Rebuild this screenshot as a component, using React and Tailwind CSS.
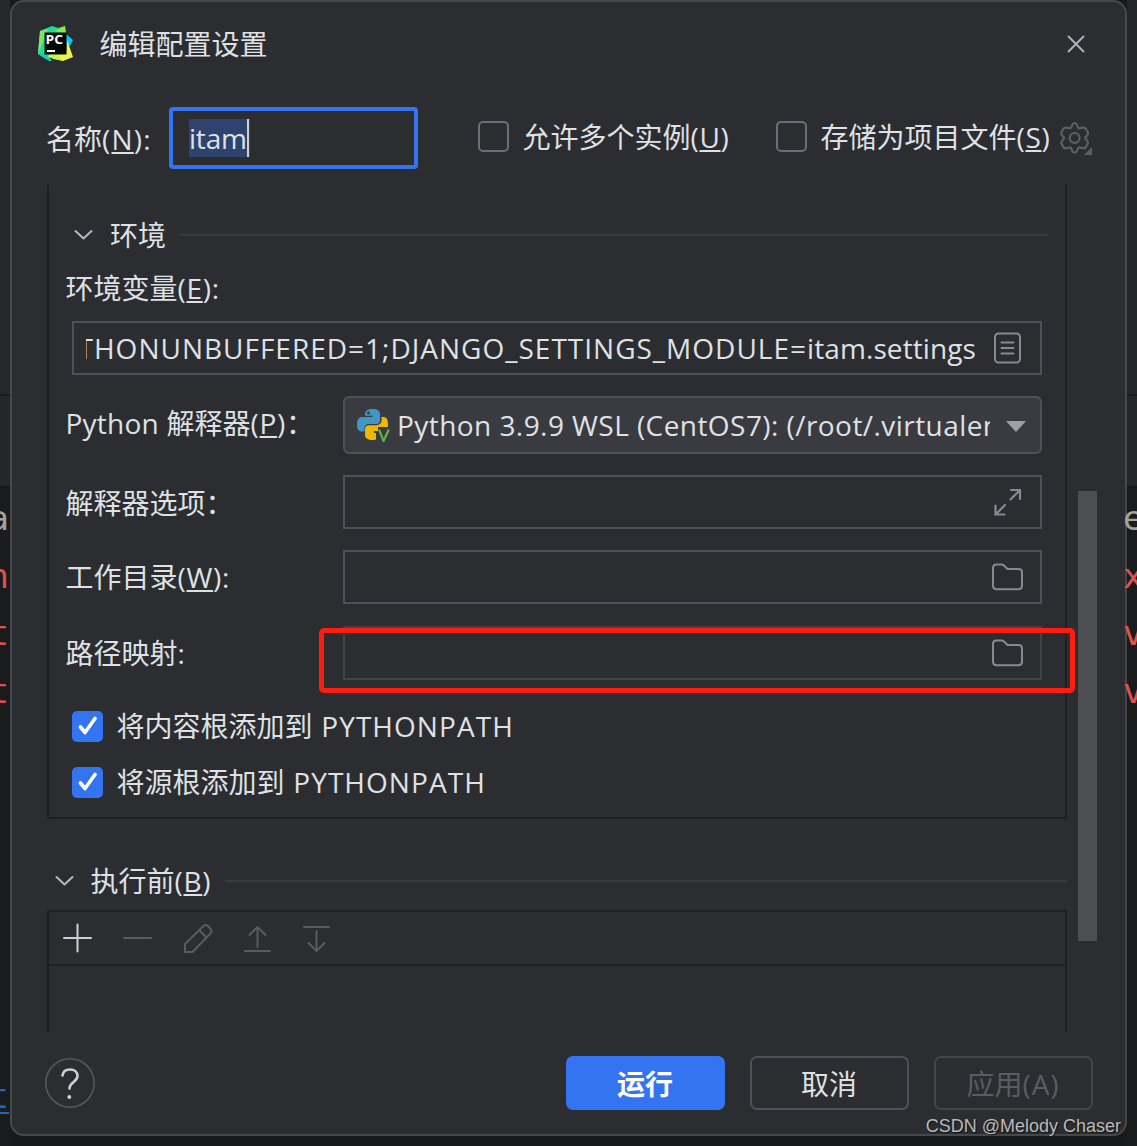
import clsx from 'clsx';

function Chevron() {
  return (
    <svg width="20" height="14" viewBox="0 0 20 14" fill="none" className="shrink-0">
      <path d="M2.500 3L10.500 10.500L18.500 3" stroke="#b4b8bf" strokeWidth="2" strokeLinecap="round" strokeLinejoin="round" />
    </svg>
  );
}

function FolderIcon() {
  return (
    <svg width="32" height="28" viewBox="0 0 32 28" fill="none">
      <path
        d="M1 5C1 3 2.300 1.500 4.300 1.500H9.700C10.500 1.500 11.100 1.800 11.700 2.300L15.500 6H26.500C28.700 6 30 7.300 30 9.300V22.800C30 25 28.700 26.200 26.500 26.200H4.500C2.300 26.200 1 25 1 22.800Z"
        stroke="#868a91"
        strokeWidth="2"
        strokeLinejoin="round"
      />
    </svg>
  );
}

function ListIcon() {
  return (
    <svg width="28" height="32" viewBox="0 0 28 32" fill="none" stroke="#868a91" strokeWidth="2">
      <rect x="1" y="1.500" width="25" height="29" rx="3.500" />
      <path d="M7.500 10.500H19.500M7.500 16H19.500M7.500 21.500H19.500" strokeLinecap="round" />
    </svg>
  );
}

function ExpandIcon() {
  return (
    <svg width="28" height="28" viewBox="0 0 28 28" fill="none" stroke="#868a91" strokeWidth="2.200" strokeLinecap="round">
      <path d="M17 2H26V11M25.500 2.500L16.500 11.500M1.500 17.500V26.500H10.500M2 26L11 17" />
    </svg>
  );
}

function GearIcon() {
  return (
    <svg width="33" height="34" viewBox="0 0 33 34" fill="none">
      <path
        d="M12.200 3.800Q12.800 2 14.600 2Q16.400 2 17 3.800L18 6.500Q18.600 7.500 19.800 7.200L23 6.600Q25 6.300 26 8L27.700 11Q28.500 12.600 27.300 14.200L25.700 16Q25 17 25.700 18L27.300 19.900Q28.500 21.300 27.600 23L26 25.900Q25 27.600 23 27.200L19.800 26.500Q18.600 26.300 18 27.400L17 30Q16.400 31.700 14.600 31.700Q12.800 31.700 12.200 30L11.200 27.400Q10.600 26.300 9.400 26.500L6.200 27.200Q4.200 27.600 3.200 25.900L1.700 23Q.8 21.300 2 19.900L3.600 18Q4.300 17 3.600 16L2 14.200Q.8 12.600 1.600 11L3.200 8Q4.200 6.300 6.200 6.600L9.400 7.200Q10.600 7.500 11.200 6.500Z"
        stroke="#5e5f61"
        strokeWidth="2.200"
      />
      <circle cx="14.600" cy="16.900" r="4.900" stroke="#5e5f61" strokeWidth="2.200" />
      <path d="M32 26V34H24Z" fill="#5e5f61" />
    </svg>
  );
}

function PyCharmLogo() {
  return (
    <svg width="36" height="36" viewBox="0 0 36 36">
      <path d="M2 5L14 0L20 2L27 0L28 10L8 33L0 28Z" fill="#25d99a" />
      <path d="M2 5L10 3L5 16L0 28Z" fill="#7ce564" />
      <path d="M17 5L27 0L28 8Z" fill="#8de94a" />
      <path d="M28 8L35 14L32 20L28 18Z" fill="#10c4ee" />
      <path d="M0 28L8 26L14 35L11 35Z" fill="#18ccae" />
      <path d="M29 14L35 31L25 35L10 31L12 28L28 28Z" fill="#e9f74b" />
      <path d="M10 29L20 29L26 35L15 33Z" fill="#c8f34d" />
      <rect x="6.500" y="6.500" width="22" height="22" fill="#050a06" />
      <text
        x="7.600"
        y="17.500"
        className="font-['Open_Sans'] text-[12px] font-bold"
        textLength="17.500"
        lengthAdjust="spacingAndGlyphs"
        fill="#fff"
      >
        PC
      </text>
      <rect x="9" y="24" width="8" height="2" fill="#fff" />
    </svg>
  );
}

function PythonLogo() {
  return (
    <svg width="33" height="33" viewBox="0 0 33 33">
      <path
        d="M8 6C8 2 10 0 15.500 0C21 0 23 2 23 5V11C23 14 21.500 15 19 15H12C9 15 7.500 17 7.500 19V22.500H5C1.500 22.500 0 20 0 15.500C0 10.500 2 8 5.500 8H15.500V6.800H8Z"
        fill="#4296c4"
      />
      <circle cx="11.500" cy="4" r="1.400" fill="#393b40" />
      <path
        d="M24.500 8H26.500C30 8 31 11 31 15.500V18H21V22H17V24H19V30.500C18 31 17 31 15.500 31C11 31 8 29.500 8 26V20C8 17.500 9.500 16.200 12 16.200H19.500C22.500 16.200 24.500 14 24.500 11.500Z"
        fill="#edb900"
      />
      <path d="M22 20.500L26.500 32L31.800 20.500" fill="none" stroke="#5fb23f" strokeWidth="2.200" />
    </svg>
  );
}

function Checkbox({ checked }) {
  return (
    <span
      className={clsx(
        'flex size-[31px] shrink-0 items-center justify-center rounded-[5px]',
        checked ? 'bg-[#3574f0]' : 'border-2 border-[#6b6f76]'
      )}
    >
      {checked && (
        <svg width="20" height="20" viewBox="0 0 20 20" fill="none">
          <path d="M2.500 11L7 16.500L17 2.500" stroke="#fff" strokeWidth="3.600" strokeLinecap="round" strokeLinejoin="round" />
        </svg>
      )}
    </span>
  );
}

// (X) part of a label with the underlined accelerator key
function Mnemonic({ children }) {
  return (
    <span className="tracking-[0.7px]">
      (<span className="underline decoration-2 underline-offset-[2px]">{children}</span>)
    </span>
  );
}

function Field({ className, children }) {
  return (
    <div className={clsx('flex h-[54px] items-center justify-end border-2 border-[#4e5157]', className)}>
      {children}
    </div>
  );
}

function Row({ label, children }) {
  return (
    <div className="flex items-center">
      <div className="w-[278px] shrink-0 pl-[0.5px]">{label}</div>
      {children}
    </div>
  );
}

function EditorStrip({ left, letters }) {
  return (
    <div
      className={clsx(
        'flex w-[10px] shrink-0 flex-col bg-[#1a1b1c] font-["DejaVu_Sans_Mono",monospace] text-[34px] leading-[57.5px]',
        left ? 'items-end' : 'items-start'
      )}
    >
      <div className={clsx('h-[396px] w-full shrink-0 border-b-2 border-[#1a1b1d]', left ? 'bg-[#27282a]' : 'bg-[#252628]')} />
      <div className="h-[92px] w-full shrink-0 border-b-2 border-[#161718] bg-[#252628]" />
      <div className={clsx('flex flex-col pt-[2px]', left ? 'mr-px' : '-ml-[4px]')}>
        <span className="text-[#a5a39e]">{letters[0]}</span>
        {letters.slice(1).map((letter, i) => (
          <span key={i} className="text-[#dc5350]">{letter}</span>
        ))}
        {left && <span className="mt-[348px] text-[#2566bb] underline decoration-2 underline-offset-[4px]">t</span>}
      </div>
    </div>
  );
}

export default function App() {
  return (
    <div className="relative flex h-[1146px] w-[1137px] overflow-hidden bg-[#18191b] font-['Open_Sans','Noto_Sans_CJK_SC',sans-serif] text-[28px] leading-[36px] whitespace-nowrap text-[#dfe1e5]">
      <EditorStrip left letters={['a', 'n', 't', 't']} />

      <div className="flex h-[1136px] w-[1117px] shrink-0 flex-col rounded-[14px] border-2 border-[#46484b] bg-[#2b2d30]">
        <header className="flex h-[84px] shrink-0 items-center pr-[39px] pl-[26px]">
          <PyCharmLogo />
          <h1 className="ml-[25.5px] flex-1">编辑配置设置</h1>
          <svg width="20" height="20" viewBox="0 0 20 20" className="shrink-0">
            <path d="M2 2L18 18M18 2L2 18" stroke="#b4b8bf" strokeWidth="1.800" />
          </svg>
        </header>

        <div className="mt-[21px] flex h-[62px] shrink-0 items-center pl-[34px]">
          <div className="w-[123px] pt-px">
            名称<span className="tracking-[1.2px]">(<span className="underline decoration-2 underline-offset-[2px]">N</span>):</span>
          </div>
          <div className="flex h-[62px] w-[249px] items-center rounded-[4px] border-4 border-[#3574f0] pl-[16px]">
            <span className="flex h-[38px] w-[61px] items-center bg-[#2e436e] tracking-[-0.2px]">
              itam
              <span className="h-[38px] w-[2px] shrink-0 bg-[#ced0d6]" />
            </span>
          </div>
          <label className="mb-[3px] ml-[60px] flex w-[298px] items-center gap-[13.5px]">
            <Checkbox />
            <span>允许多个实例<Mnemonic>U</Mnemonic></span>
          </label>
          <label className="mb-[3px] flex w-[284px] items-center gap-[13.5px]">
            <Checkbox />
            <span>存储为项目文件<Mnemonic>S</Mnemonic></span>
          </label>
          <GearIcon />
        </div>

        <div className="mt-[16px] flex h-[847px] shrink-0 pl-[35px]">
          <div className="flex w-[1020px] flex-col">
            <section className="flex h-[634px] shrink-0 flex-col border-x-2 border-b-2 border-[#1e1f22] pr-[23px] pl-[16px]">
              <div className="mt-[32px] flex items-center pl-[8px]">
                <Chevron />
                <h2 className="ml-[17px]">环境</h2>
                <div className="ml-[14px] -mr-[6px] h-[2px] w-[868px] bg-[#393b40]" />
              </div>
              <div className="mt-[17px] pl-[0.5px]">
                环境变量<Mnemonic>E</Mnemonic>:
              </div>
              <Field className="mt-[15px] ml-[7px] pr-[18px]">
                <div className="mr-[18px] flex w-[890px] justify-end overflow-hidden">
                  <span className="tracking-[1px]">PYTHONUNBUFFERED=1;DJANGO_SETTINGS_MODULE=</span>
                  <span className="tracking-[0.1px]">itam.settings</span>
                </div>
                <ListIcon />
              </Field>

              <div className="mt-[21px] flex flex-col">
                <Row
                  label={
                    <div className="mb-[4px]">
                      <span className="tracking-[0.25px]">Python </span>解释器<Mnemonic>P</Mnemonic>：
                    </div>
                  }
                >
                  <div className="flex h-[58px] flex-1 items-center rounded-[6px] border-2 border-[#4e5157] bg-[#393b40] pl-[12px]">
                    <PythonLogo />
                    <span className="ml-[7px] w-[593px] overflow-hidden tracking-[0.44px]">
                      Python 3.9.9 WSL (CentOS7): (/root/.virtualenvs
                    </span>
                    <svg width="20" height="12" viewBox="0 0 20 12" className="mt-[3px] ml-[16px]">
                      <path d="M0 0H20L10 11Z" fill="#9da0a8" />
                    </svg>
                  </div>
                </Row>
                <div className="mt-[21px] flex flex-col gap-[21.4px]">
                  <Row label={<div className="pt-[2px]">解释器选项：</div>}>
                    <Field className="flex-1 pr-[18px]"><ExpandIcon /></Field>
                  </Row>
                  <Row label={<>工作目录<span className="tracking-[0.8px]"><Mnemonic>W</Mnemonic>:</span></>}>
                    <Field className="flex-1 pr-[16px]"><FolderIcon /></Field>
                  </Row>
                  <div className="relative">
                    <Row label="路径映射:">
                      <Field className="flex-1 border-[#414348] pr-[16px]"><FolderIcon /></Field>
                    </Row>
                    <div className="absolute top-[2px] -right-[33px] h-[65px] w-[756px] rounded-[5px] border-5 border-[#ff1c10]" />
                  </div>
                </div>
              </div>

              <div className="mt-[31px] flex flex-col gap-[25px] pl-[7px]">
                <label className="flex h-[31px] items-center gap-[13.5px]">
                  <Checkbox checked />
                  <span>将内容根添加到 <span className="ml-[1.5px] tracking-[1.05px]">PYTHONPATH</span></span>
                </label>
                <label className="flex h-[31px] items-center gap-[13.5px]">
                  <Checkbox checked />
                  <span>将源根添加到 <span className="ml-[1.5px] tracking-[1.05px]">PYTHONPATH</span></span>
                </label>
              </div>
            </section>

            <div className="mt-[44px] flex items-center pl-[7px]">
              <Chevron />
              <h2 className="ml-[16.5px]">执行前<Mnemonic>B</Mnemonic></h2>
              <div className="ml-[14px] h-[2px] flex-1 bg-[#393b40]" />
            </div>
            <section className="mt-[11px] flex flex-1 flex-col border-x-2 border-t-2 border-[#1e1f22]">
              <div className="flex h-[54px] items-center border-b-2 border-[#1e1f22] pb-px pl-[13px]">
                <svg width="280" height="32" viewBox="0 0 280 32" fill="none" stroke="#5a5b5d" strokeWidth="2" strokeLinecap="round" strokeLinejoin="round">
                  <path d="M2 16H29M15.500 2.500V29.500" stroke="#ced0d6" />
                  <path d="M62 16H89" />
                  <path d="M123 30V22L141.500 4C143 2.700 144.500 2.700 146 4L148.500 7C149.800 8.500 149.800 10 148.500 11.500L130.500 30ZM137.500 8.500L144.500 15.500" />
                  <path d="M183 29H208M195.500 25V5M187.500 13L195.500 5L203.500 13" />
                  <path d="M242 5H267M254.500 9V29M246.500 21L254.500 29L262.500 21" />
                </svg>
              </div>
            </section>
          </div>
          <div className="mt-[306px] ml-[11px] h-[450px] w-[19px] bg-[#4d4e51]" />
        </div>

        <footer className="mt-[24px] flex items-center pr-[32.5px] pl-[33px]">
          <svg width="50" height="50" viewBox="0 0 50 50" fill="none" className="mr-auto">
            <circle cx="25" cy="25" r="24.200" stroke="#55575b" strokeWidth="1.600" />
            <path d="M17.500 17.500C18 13.500 20.500 11.500 25 11.500C29.500 11.500 32.500 14 32.500 18C32.500 24 24.500 24 24.500 30.500" stroke="#ced0d6" strokeWidth="2.600" strokeLinecap="round" />
            <circle cx="24.300" cy="39" r="2" fill="#ced0d6" />
          </svg>
          <div className="flex gap-[25px]">
            <button className="h-[54px] w-[159px] rounded-[7px] bg-[#3574f0] pt-[2px] font-bold text-white">运行</button>
            <button className="h-[54px] w-[159px] rounded-[7px] border-2 border-[#4e5157] pt-[2px]">取消</button>
            <button className="h-[54px] w-[159px] rounded-[7px] border-2 border-[#43454a] pt-[1px] text-[#5a5d63]">
              应用<span className="tracking-[1px]">(A)</span>
            </button>
          </div>
        </footer>
      </div>

      <EditorStrip letters={['e', 'x', 'v', 'v']} />

      <div className="absolute right-[16px] bottom-[8px] font-['Liberation_Sans'] text-[18px] leading-[24px] text-[#b9babb] [text-shadow:1px_1px_1px_#111]">
        CSDN @Melody Chaser
      </div>
    </div>
  );
}
